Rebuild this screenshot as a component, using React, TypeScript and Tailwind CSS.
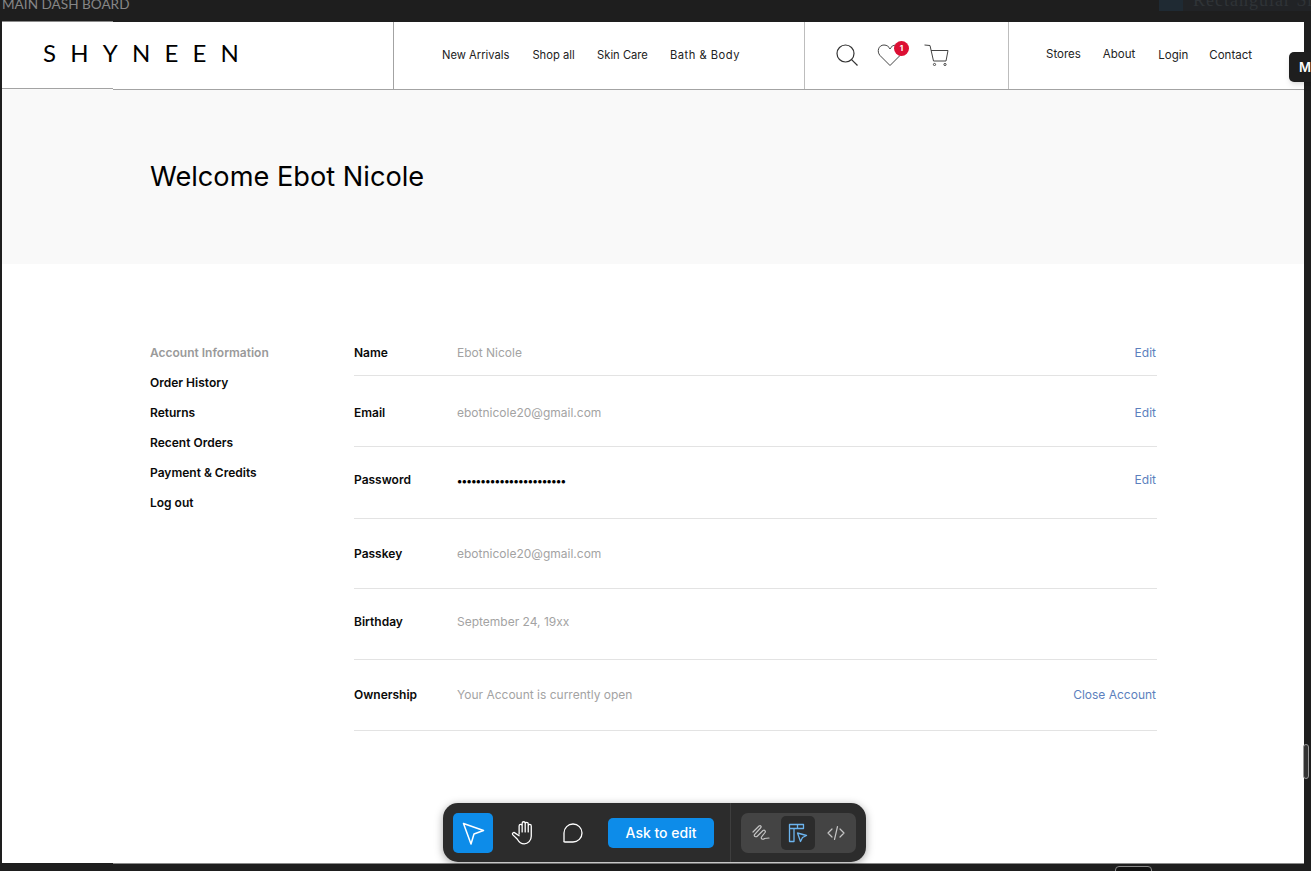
import React from "react";

const side = ["Order History", "Returns", "Recent Orders", "Payment & Credits", "Log out"];

function Row({ h, pt, label, value, link, dots }: { h: string; pt: string; label: string; value: string; link?: string; dots?: boolean }) {
  return (
    <div className={`flex items-start border-b border-[#e3e3e3] ${h} ${pt}`}>
      <div className="w-[103px] text-[12px] leading-4 font-semibold text-[#0a0a0a]">{label}</div>
      {dots ? (
        <div className="flex-1 text-[11px] leading-4 font-bold tracking-[-0.5px] text-black pt-[1px]">{value}</div>
      ) : (
        <div className="flex-1 text-[12px] leading-4 text-[#a3a3a3]">{value}</div>
      )}
      {link && <div className="text-[12px] leading-4 text-[#5c7fbd] pr-[1px]">{link}</div>}
    </div>
  );
}

export default function App() {
  return (
    <div className="relative w-[1311px] h-[871px] overflow-hidden bg-[#1e1e1e] font-['Inter',sans-serif]">
      <div className="h-[22px] relative overflow-hidden">
        <div className="absolute left-[2px] top-[-4px] text-[13.6px] leading-4 text-[#868686] font-['Lato',sans-serif]">MAIN DASH BOARD</div>
        <div className="absolute left-[1159px] top-0 w-[152px] h-[11px] bg-[#212326]" />
        <div className="absolute left-[1159px] top-0 w-[24px] h-[11px] bg-[#1f2a33]" />
        <div className="absolute left-[1193px] top-[-10px] text-[18px] leading-5 tracking-[1px] whitespace-nowrap text-[#2f3337] font-['Liberation_Serif',serif]">Rectangular Sh</div>
      </div>

      <div className="ml-[2px] w-[1302px] h-[842px] bg-white border-b border-[#8a8a8a] flex flex-col overflow-hidden">
        <header className="flex h-[68px] shrink-0 border-b border-[#a3a3a3]">
          <div className="w-[392px] flex items-center pl-[41px] border-r border-[#a3a3a3]">
            <span className="text-[24px] leading-8 font-['Lato',sans-serif] text-black tracking-[14.2px] pb-[6px]">SHYNEEN</span>
          </div>
          <nav className="w-[411px] flex items-center pl-[48px] border-r border-[#bdbdbd] text-[11.2px] text-[#222]">
            <span className="mr-[23px]">New Arrivals</span>
            <span className="mr-[22.5px]">Shop all</span>
            <span className="mr-[22px]">Skin Care</span>
            <span className="tracking-[0.5px]">Bath &amp; Body</span>
          </nav>
          <div className="w-[204px] flex items-center border-r border-[#bdbdbd] pl-[31px] pb-[2px]">
            <svg width="22" height="22" viewBox="0 0 22 22" fill="none" stroke="#333" strokeWidth="1.2">
              <circle cx="9.5" cy="9.5" r="8.5" />
              <path d="M15.6 15.6 L21.5 21.5" />
            </svg>
            <div className="relative ml-[19px] w-[26px] h-[24px]">
              <svg width="26" height="24" viewBox="0 0 26 24" fill="none" stroke="#444" strokeWidth="1">
                <path d="M13 22.5 L3 12.5 C-0.5 8.5 1.5 2 7 2 C10 2 12 3.8 13 6 C14 3.8 16 2 19 2 C24.5 2 26.5 8.5 23 12.5 Z" />
              </svg>
              <div className="absolute left-[17px] top-[-2px] w-[15px] h-[15px] rounded-full bg-[#dc0f33] text-white text-[8px] font-bold flex items-center justify-center">1</div>
            </div>
            <svg className="ml-[21px]" width="25" height="22" viewBox="0 0 25 22" fill="none" stroke="#444" strokeWidth="1">
              <path d="M0.5 1 L6 1.5 L9.5 17" />
              <path d="M7 6.5 H24 L22 17 H9.5" />
              <circle cx="10.5" cy="20.5" r="1.1" />
              <circle cx="21" cy="20.5" r="1.1" />
            </svg>
          </div>
          <nav className="flex-1 flex items-center pl-[37px] text-[11.5px] text-[#222]">
            <span className="mr-[22px] pb-[2px]">Stores</span>
            <span className="mr-[23px] pb-[2px]">About</span>
            <span className="mr-[21px]">Login</span>
            <span>Contact</span>
          </nav>
        </header>

        <section className="h-[174px] shrink-0 bg-[#f9f9f9] pl-[148px] pt-[69px]">
          <h1 className="text-[27.2px] leading-9 font-normal text-black">Welcome Ebot Nicole</h1>
        </section>

        <main className="flex pl-[148px] pt-[80px]">
          <aside className="w-[204px] flex flex-col gap-[14px] pt-[1px] text-[12px] leading-4 font-semibold text-[#0a0a0a]">
            <div className="text-[#9a9a9a]">Account Information</div>
            {side.map((s) => (
              <div key={s}>{s}</div>
            ))}
          </aside>
          <div className="w-[803px]">
            <Row h="h-[32px]" pt="pt-[1px]" label="Name" value="Ebot Nicole" link="Edit" />
            <Row h="h-[71px]" pt="pt-[29px]" label="Email" value="ebotnicole20@gmail.com" link="Edit" />
            <Row h="h-[72px]" pt="pt-[25px]" label="Password" value="•••••••••••••••••••••••" link="Edit" dots />
            <Row h="h-[70px]" pt="pt-[27px]" label="Passkey" value="ebotnicole20@gmail.com" />
            <Row h="h-[71px]" pt="pt-[25px]" label="Birthday" value="September 24, 19xx" />
            <Row h="h-[71px]" pt="pt-[27px]" label="Ownership" value="Your Account is currently open" link="Close Account" />
          </div>
        </main>
      </div>

      <div className="absolute left-[2px] top-[21px] w-[111px] h-[1px] bg-[#8a8a8a]" />
      <div className="absolute left-[2px] top-[88px] w-[111px] h-[1px] bg-[#a3a3a3]" />
      <div className="absolute left-[2px] top-[89px] w-[111px] h-[1px] bg-[#f9f9f9]" />
      <div className="absolute left-[2px] top-[863px] w-[111px] h-[1px] bg-[#1e1e1e]" />
      <div className="absolute left-[1289px] top-[52px] w-[30px] h-[30px] rounded-l-[5px] bg-[#1e1e1e] shadow-md text-white text-[13px] font-semibold pl-[10px] leading-[30px]">M</div>
      <div className="absolute left-[1303px] top-[744px] w-[6px] h-[35px] rounded-full border border-[#9a9a9a] bg-[#333]" />
      <div className="absolute left-[1115px] top-[866px] w-[37px] h-[10px] rounded-t-[4px] border border-[#8a8a8a] bg-[#111]" />

      <div className="absolute left-[443px] top-[803px] w-[423px] h-[59px] rounded-[15px] bg-[#2c2c2c] shadow-[0_2px_8px_rgba(0,0,0,0.35)] flex items-center">
        <div className="w-[40px] h-[40px] ml-[10px] rounded-[5px] bg-[#0d8ce9] flex items-center justify-center">
          <svg width="24" height="24" viewBox="0 0 24 24" fill="none" stroke="white" strokeWidth="1.5" strokeLinejoin="round">
            <path d="M2.5 2.5 L22.5 9.5 L13 13 L10 23 Z" />
          </svg>
        </div>
        <svg className="ml-[18px]" width="26" height="26" viewBox="0 0 24 24" fill="none" stroke="white" strokeWidth="1.2" strokeLinecap="round" strokeLinejoin="round">
          <path d="M7.5 13 V5.5 a1.4 1.4 0 0 1 2.8 0 V11 M10.3 10 V3 a1.4 1.4 0 0 1 2.8 0 V11 M13.1 10 V3.5 a1.4 1.4 0 0 1 2.8 0 V11 M15.9 10 V5.5 a1.4 1.4 0 0 1 2.8 0 V15 c0 4 -3 7 -6.5 7 c-3.5 0 -4.8 -1.5 -6.5 -4.5 L1.5 13.5 c-0.8 -1.5 1.2 -2.6 2.3 -1.4 L7.5 14.5" />
        </svg>
        <svg className="ml-[25px]" width="22" height="22" viewBox="0 0 22 22" fill="none" stroke="white" strokeWidth="1.3" strokeLinejoin="round">
          <path d="M2 19 Q1.5 20 3 20 H11 a9 9 0 1 0 -9 -9 Z" />
        </svg>
        <div className="ml-[24px] w-[106px] h-[30px] rounded-[5px] bg-[#0d8ce9] text-white text-[14px] font-medium flex items-center justify-center">Ask to edit</div>
        <div className="ml-[16px] w-[1px] h-[59px] bg-[#3e3e3e]" />
        <div className="ml-[10px] w-[115px] h-[40px] rounded-[7px] bg-[#444444] flex items-center relative">
          <svg className="ml-[10px]" width="20" height="20" viewBox="0 0 20 20" fill="none" stroke="#c4c4c4" strokeWidth="1.2" strokeLinecap="round">
            <path d="M2 9 L8 3 C9.5 2 11 3.5 9.5 5 L3.5 11.5 C2.5 13.5 5 14.5 6.5 13 L12 7.5 C13.5 6.5 15 8 14 9.5 L10.5 14 C9.5 16 12 17 13.5 15.5 L18 15" />
          </svg>
          <div className="ml-[10px] w-[34px] h-[34px] rounded-[5px] bg-[#2c2c2c] flex items-center justify-center">
            <svg width="20" height="20" viewBox="0 0 20 20" fill="none" stroke="#6cb4ee" strokeWidth="1.3" strokeLinejoin="round">
              <path d="M1.5 1.5 H15.5 V5.5 H6 V18.5 H1.5 Z M1.5 5.5 H6 M9.5 1.5 V5.5" />
              <path d="M9.5 10 L18.5 12.5 L14.5 14.5 L12.5 18.5 Z" />
            </svg>
          </div>
          <svg className="ml-[11px]" width="20" height="20" viewBox="0 0 20 20" fill="none" stroke="#c4c4c4" strokeWidth="1.2" strokeLinecap="round" strokeLinejoin="round">
            <path d="M6 6 L2 10 L6 14 M14 6 L18 10 L14 14 M11.5 3.5 L8.5 16.5" />
          </svg>
        </div>
      </div>
    </div>
  );
}
